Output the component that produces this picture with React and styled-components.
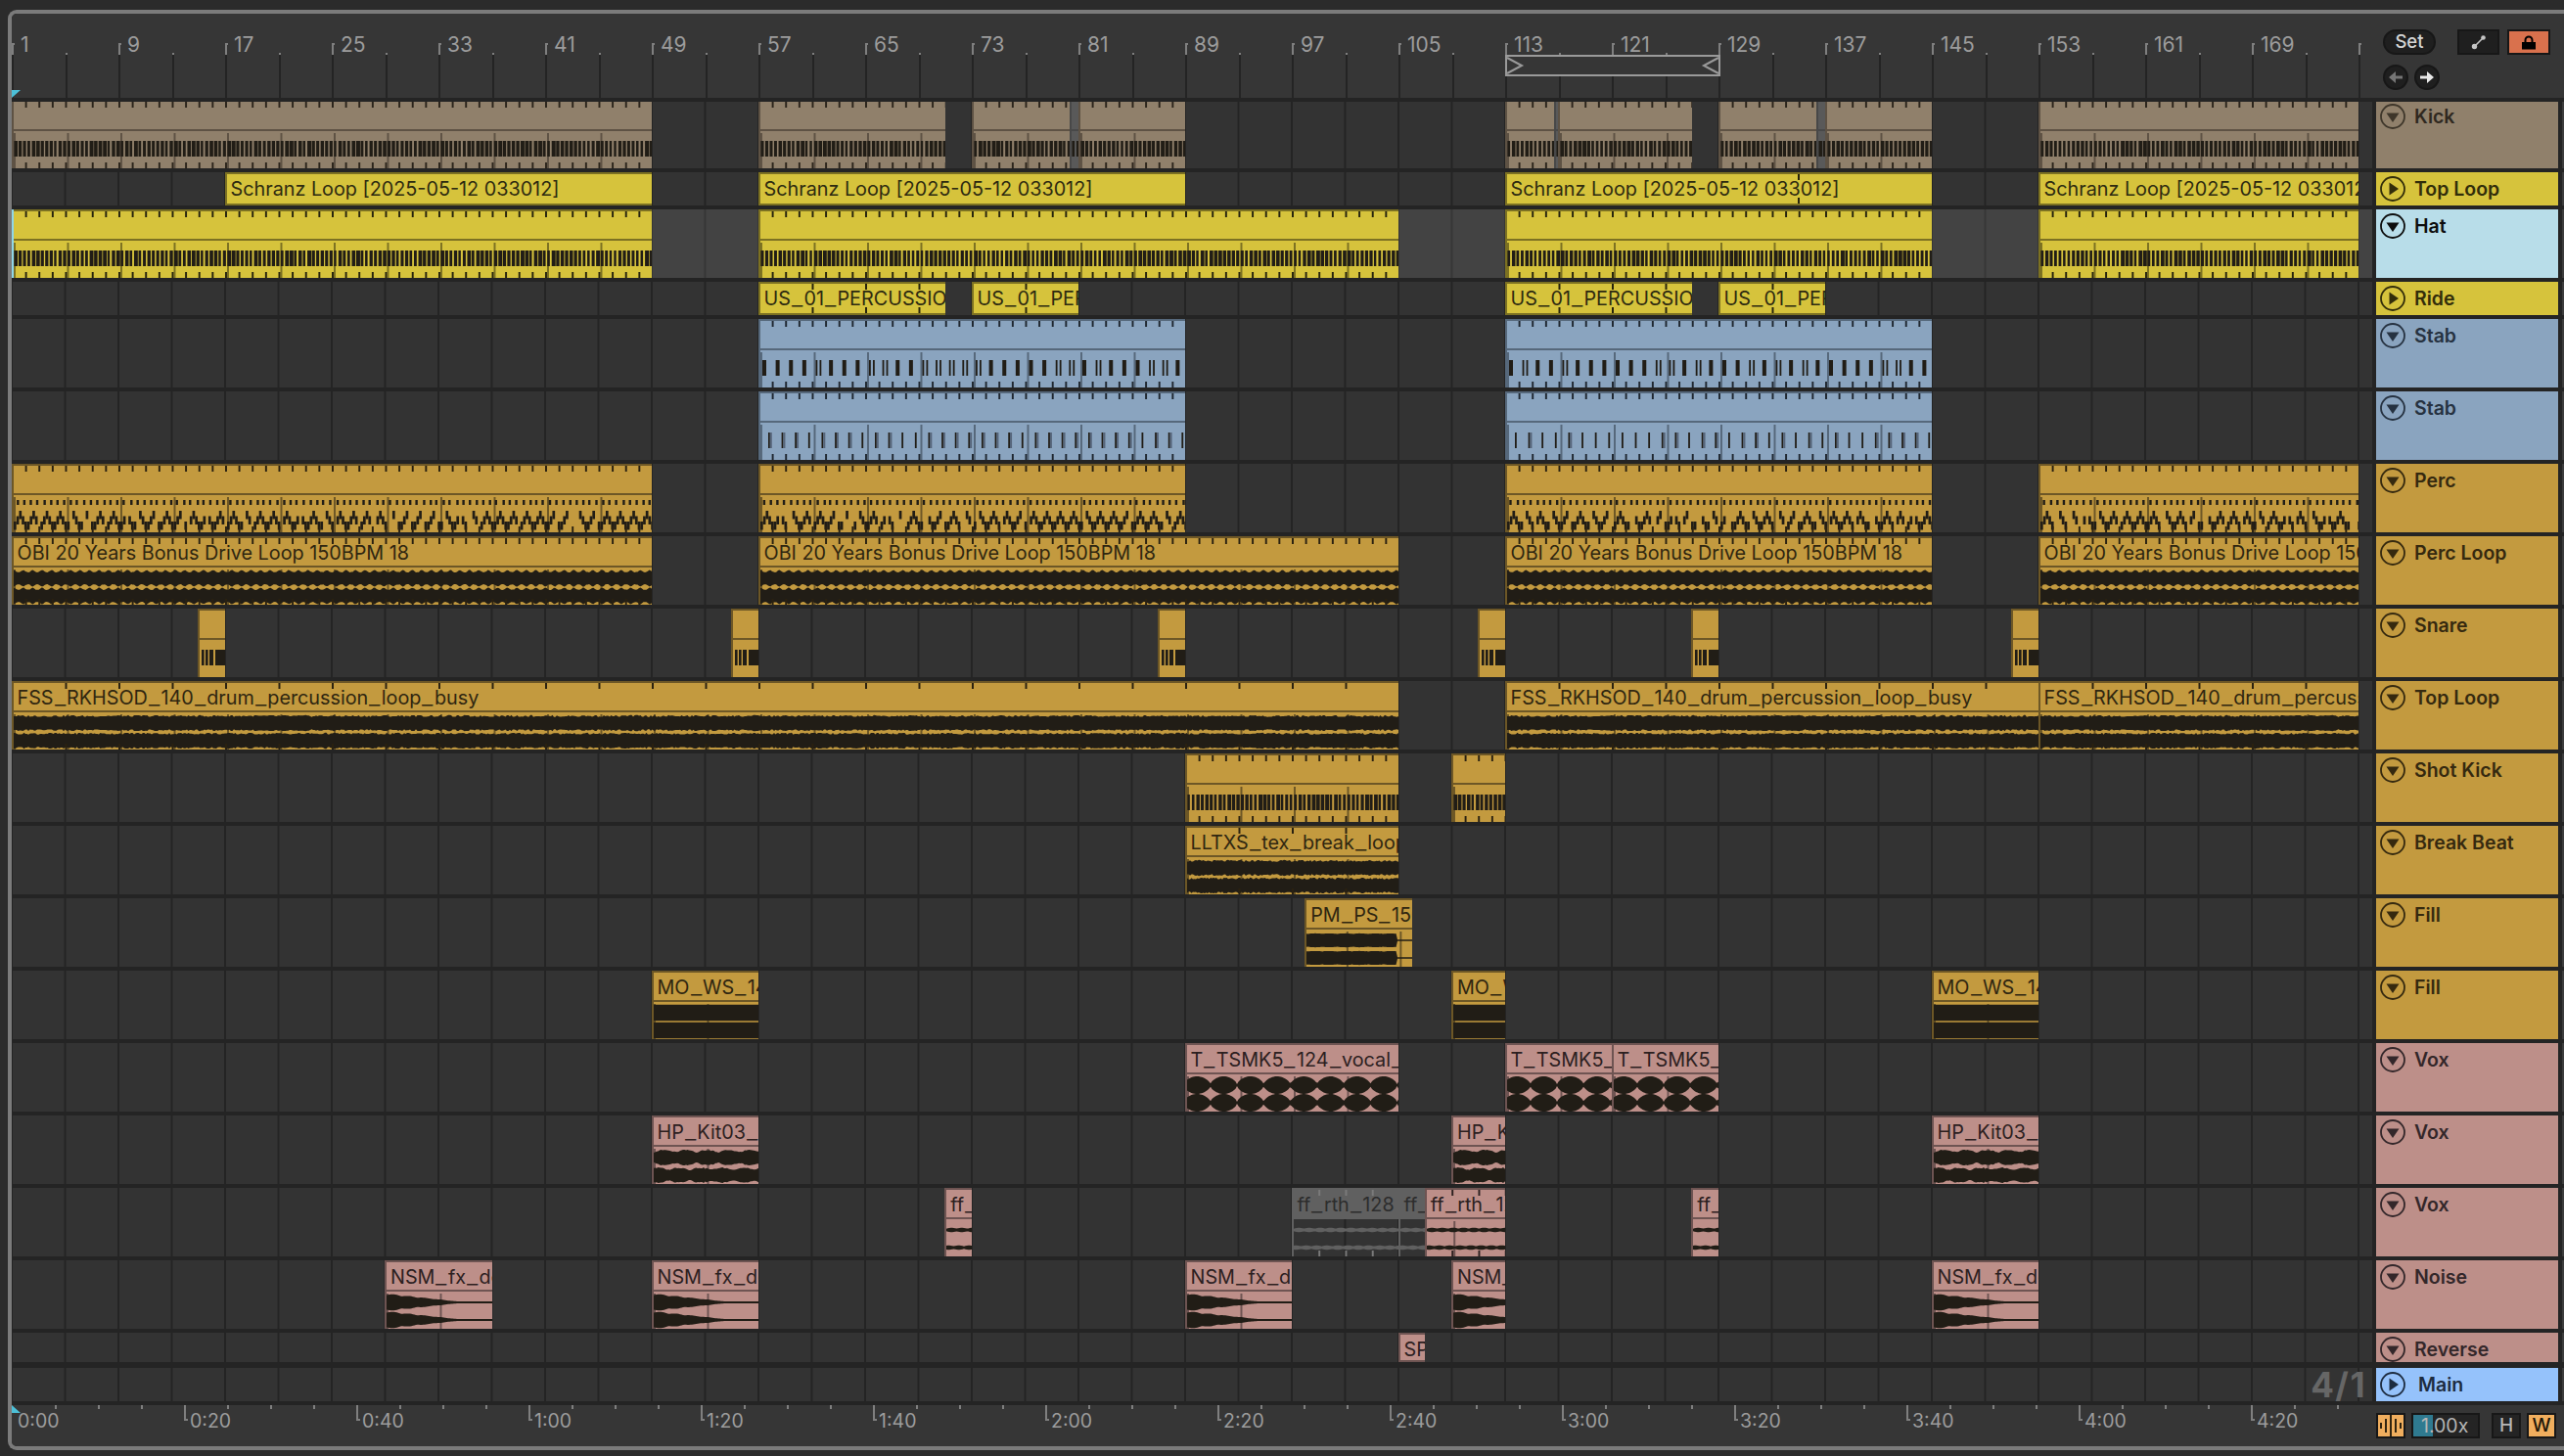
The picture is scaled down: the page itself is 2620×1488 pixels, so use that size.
import React from 'react'
import styled, { createGlobalStyle } from 'styled-components'

const BAR = 13.625
const INK = '#211d16'

const TONES = {
  tan: { bg: '#90806b', edge: '#5e5244', seam: '#5e5244', text: '#2b241b', tick: '#2b241b' },
  yellow: { bg: '#d6c33c', edge: '#7c7122', seam: '#7c7122', text: '#2d2a10', tick: '#26230d' },
  blue: { bg: '#8aa4bf', edge: '#56687b', seam: '#56687b', text: '#1e2833', tick: '#1f2730' },
  gold: { bg: '#c39a3f', edge: '#6d5726', seam: '#6d5726', text: '#2f2610', tick: '#2a2110' },
  pink: { bg: '#bd8f89', edge: '#6e5452', seam: '#6e5452', text: '#2c201f', tick: '#2c201f' },
  muted: { bg: '#595959', edge: '#484848', seam: '#484848', text: '#2a2a2a', tick: '#2a2a2a' },
  ghost: { bg: '#606060', edge: '#606060', seam: 'transparent', text: '#2d2d2d', tick: '#7a7a7a', clear: true },
}

const Global = createGlobalStyle`
  html, body { margin: 0; padding: 0; background: #2b2b2b; }
  body { font-family: Inter, "Noto Sans", "Liberation Sans", sans-serif; overflow: hidden; }
`

const Page = styled.div`
  width: 2620px;
  height: 1488px;
  padding: 10px 0 6px 8px;
  box-sizing: border-box;
`

const Frame = styled.div`
  height: 100%;
  box-sizing: border-box;
  border: 4px solid #7b7b7b;
  border-right: 0;
  border-radius: 9px 0 0 9px;
  background: #242424;
  display: flex;
  flex-direction: column;
  overflow: hidden;
`

const TopRow = styled.div`
  display: flex;
  height: 86px;
  flex: none;
  margin-bottom: 4px;
  background: #363636;
`

const RulerTop = styled.div`
  position: relative;
  width: 2412px;
  flex: none;
  display: flex;
  overflow: hidden;
`

const BarCell = styled.div`
  position: relative;
  flex: none;
  width: 109px;
  box-sizing: border-box;
  padding: 21px 0 0 9px;
  font-size: 21px;
  line-height: 22px;
  color: #9c9c9c;
  background:
    linear-gradient(#242424, #242424) 0 100% / 2px 44px no-repeat,
    linear-gradient(#242424, #242424) 54.5px 100% / 2px 44px no-repeat,
    linear-gradient(#7f7f7f, #7f7f7f) 54.5px 40px / 2px 2px no-repeat;
  &::before {
    content: '';
    position: absolute;
    left: 0;
    top: 30px;
    width: 3px;
    height: 12px;
    border-left: 2px solid #7f7f7f;
    border-top: 2px solid #7f7f7f;
    box-sizing: border-box;
  }
`

const Marker = styled.div`
  position: absolute;
  left: 0;
  width: 9px;
  height: 8px;
  background: #4cc0d8;
  z-index: 2;
  ${(p) => (p.$up
    ? 'top: 0; clip-path: polygon(0 0, 100% 100%, 0 100%);'
    : 'bottom: 0; clip-path: polygon(0 0, 100% 0, 0 100%);')}
`

const LoopBrace = styled.div`
  position: absolute;
  left: 1526px;
  top: 42px;
  width: 220px;
  height: 22px;
  box-sizing: border-box;
  border: 2px solid #9a9a9a;
  background: #363636;
  display: flex;
  justify-content: space-between;
  align-items: center;
  z-index: 1;
`

const ControlsTop = styled.div`
  width: 186px;
  margin-left: 4px;
  flex: none;
  box-sizing: border-box;
  padding: 16px 0 0 7px;
  display: flex;
  flex-direction: column;
  gap: 10px;
`

const ControlLine = styled.div`
  display: flex;
  align-items: center;
`

const SetPill = styled.div`
  width: 57px;
  height: 26px;
  box-sizing: border-box;
  border-radius: 13px;
  background: #1f1f1f;
  border: 2px solid #171717;
  color: #d4d4d4;
  font-size: 18.5px;
  font-weight: 500;
  line-height: 21px;
  text-align: center;
  margin-right: 22px;
`

const SquareBtn = styled.div`
  width: 46px;
  height: 26px;
  box-sizing: border-box;
  background: ${(p) => p.$bg || '#1f1f1f'};
  border: 2px solid #171717;
  margin-right: 8px;
  display: flex;
  align-items: center;
  justify-content: center;
`

const RoundBtn = styled.div`
  width: 26px;
  height: 26px;
  box-sizing: border-box;
  border-radius: 50%;
  background: #1f1f1f;
  border: 2px solid #171717;
  margin-right: 6px;
  display: flex;
  align-items: center;
  justify-content: center;
`

const Row = styled.div`
  display: flex;
  flex: none;
  height: ${(p) => p.$h}px;
  margin-bottom: ${(p) => p.$gap ?? 4}px;
`

const Lane = styled.div`
  position: relative;
  width: 2412px;
  flex: none;
  overflow: hidden;
  background-color: ${(p) => (p.$selected ? '#434343' : '#333333')};
  background-image: linear-gradient(to right, ${(p) => (p.$selected ? '#363636' : '#242424')} 2px, transparent 2px);
  background-size: 54.5px 100%;
  background-position: -1px 0;
  ${(p) => p.$selected && `
    &::after {
      content: '';
      position: absolute;
      left: 0;
      top: 0;
      bottom: 0;
      width: 2px;
      background: #8fd6e8;
      z-index: 3;
    }
  `}
`

const Edge = styled.div`
  width: 2px;
  margin-left: 4px;
  flex: none;
  background: #3c3c3c;
`

const Head = styled.div`
  width: 186px;
  margin-left: 4px;
  flex: none;
  box-sizing: border-box;
  padding: ${(p) => (p.$tight ? 2 : 4)}px 0 0 4px;
  background: ${(p) => p.$bg};
  color: ${(p) => p.$fg};
  display: flex;
  align-items: flex-start;
  gap: ${(p) => (p.$wide ? 13 : 9)}px;
  overflow: hidden;
`

const HeadName = styled.span`
  font-size: 19.5px;
  font-weight: 600;
  line-height: 26px;
`

const ClipBox = styled.div`
  position: absolute;
  top: 0;
  bottom: 0;
  box-sizing: border-box;
  display: flex;
  flex-direction: column;
  overflow: hidden;
  border-left: 2px solid ${(p) => p.$tone.edge};
  border-top: ${(p) => (p.$flat ? 0 : 2)}px solid ${(p) => p.$tone.edge};
  border-bottom: ${(p) => (p.$short ? 2 : 0)}px solid ${(p) => p.$tone.edge};
  background: ${(p) => (p.$tone.clear ? 'transparent' : p.$tone.bg)};
`

const ClipTitle = styled.div`
  flex: none;
  height: ${(p) => (p.$short ? '100%' : '30px')};
  box-sizing: border-box;
  padding-left: 4px;
  background: ${(p) => p.$tone.bg};
  border-bottom: ${(p) => (p.$short ? 0 : 2)}px solid ${(p) => (p.$tone.clear ? 'transparent' : p.$tone.edge)};
  color: ${(p) => p.$tone.text};
  font-size: 19.8px;
  line-height: 30px;
  white-space: nowrap;
  overflow: hidden;
`

// the clip font draws a long underscore
const Under = styled.span`
  display: inline-block;
  width: 13.5px;
  text-align: center;
  transform: scaleX(1.25);
`

const WaveBand = styled.div`
  flex: 1;
  position: relative;
  margin-top: 2px;
  background-image: linear-gradient(to right, ${(p) => p.$tone.seam} 2px, transparent 2px);
  background-size: 54.5px 100%;
  background-position: ${(p) => p.$shift}px 0;
  svg { position: absolute; left: 0; top: 0; display: block; }
`

const Ticks = styled.div`
  position: absolute;
  inset: 0;
  pointer-events: none;
  background-image:
    linear-gradient(to right, ${(p) => p.$color} 2px, transparent 2px),
    linear-gradient(to right, ${(p) => p.$color} 2px, transparent 2px);
  background-size: ${(p) => p.$step * BAR}px 6px;
  background-repeat: repeat-x;
  background-position: ${(p) => p.$shift}px 0, ${(p) => p.$shift}px 100%;
`

const SeamTick = styled.div`
  position: absolute;
  top: 0;
  bottom: 0;
  width: 2px;
  background: linear-gradient(${(p) => p.$color} 6px, transparent 6px, transparent calc(100% - 6px), ${(p) => p.$color} calc(100% - 6px));
`

const Meter = styled.div`
  position: absolute;
  right: 6px;
  top: 0;
  font-size: 35px;
  font-weight: 700;
  letter-spacing: 1.5px;
  line-height: 34px;
  color: #666666;
  z-index: 2;
`

const BottomRow = styled.div`
  flex: 1;
  display: flex;
  background: #363636;
`

const RulerBottom = styled.div`
  position: relative;
  width: 2412px;
  flex: none;
  display: flex;
  overflow: hidden;
`

const TimeCell = styled.div`
  position: relative;
  flex: none;
  width: 176px;
  box-sizing: border-box;
  padding: 5px 0 0 6px;
  font-size: 19.5px;
  line-height: 22px;
  color: #9c9c9c;
  background:
    linear-gradient(#7f7f7f, #7f7f7f) 44px 0 / 2px 4px no-repeat,
    linear-gradient(#7f7f7f, #7f7f7f) 88px 0 / 2px 4px no-repeat,
    linear-gradient(#7f7f7f, #7f7f7f) 132px 0 / 2px 4px no-repeat;
  &::before {
    content: '';
    position: absolute;
    left: 0;
    top: 0;
    width: 4px;
    height: 16px;
    box-sizing: border-box;
    border-left: 2px solid #7f7f7f;
    border-bottom: 2px solid #7f7f7f;
    opacity: ${(p) => (p.$first ? 0 : 1)};
  }
`

const ControlsBottom = styled.div`
  width: 186px;
  margin-left: 4px;
  flex: none;
  box-sizing: border-box;
  padding-top: 8px;
  display: flex;
  align-items: flex-start;
`

const SmallBtn = styled.div`
  width: 30px;
  height: 26px;
  box-sizing: border-box;
  border: 2px solid #171717;
  background: ${(p) => (p.$on ? '#f0ae5e' : '#242424')};
  color: ${(p) => (p.$on ? '#1c1608' : '#b6b6b6')};
  margin-left: ${(p) => p.$ml || 0}px;
  font-size: 19px;
  font-weight: 500;
  line-height: 22px;
  text-align: center;
  display: flex;
  align-items: center;
  justify-content: center;
`

const ZoomField = styled.div`
  position: relative;
  width: 70px;
  height: 26px;
  margin-left: 6px;
  box-sizing: border-box;
  border: 2px solid #171717;
  background: #242424;
  color: #b6b6b6;
  font-size: 19.5px;
  line-height: 22px;
  padding-left: 8px;
  overflow: hidden;
`

const ZoomFill = styled.div`
  position: absolute;
  left: 0;
  top: 0;
  bottom: 0;
  width: 20px;
  background: #2f7a90;
`

const ZoomText = styled.span`
  position: relative;
`

const rnd = (i, seed = 0) => {
  const v = Math.sin((i + 1) * 12.9898 + seed * 78.233) * 43758.5453
  return v - Math.floor(v)
}

// two stereo channels, mirrored round their own centre
const stereoPath = (w, amp, c1 = 9, c2 = 27) => {
  const step = 1.5
  const build = (c, salt) => {
    const top = []
    const bot = []
    for (let x = 0; x <= w + step; x += step) {
      const a = amp(x, salt)
      top.push(`${x.toFixed(1)} ${(c - a).toFixed(1)}`)
      bot.unshift(`${x.toFixed(1)} ${(c + a).toFixed(1)}`)
    }
    return `M${top.join('L')}L${bot.join('L')}Z`
  }
  return build(c1, 0) + build(c2, 1)
}

const AMPS = {
  obi: (x, s) => 5.9 + 2.3 * Math.pow(Math.abs(Math.cos((x * Math.PI) / 9.7)), 3) + 0.5 * rnd(Math.floor(x), s + 1),
  busy: (x, s) => 6.3 + 1.9 * rnd(Math.floor(x / 2), s + 3),
  brk: (x, s) => 6.2 + 2 * rnd(Math.floor(x / 1.5), s + 5),
  tail: (x, s) => (x > 92 ? 0.8 : 6.5 + 0.4 * Math.abs(Math.sin(x / 5)) + 0.3 * rnd(Math.floor(x), s)),
  flat: () => 8.2,
  vocal: (x) => 0.8 + 8.2 * Math.pow(Math.abs(Math.sin((x * Math.PI) / 27.25 + 0.4)), 0.6),
  kit: (x, s) => 4.8 + 2.2 * Math.abs(Math.sin(x / 7 + s)) + 1.2 * rnd(Math.floor(x / 2), s + 2),
  thin: (x, s) => 1.3 + 1 * Math.abs(Math.sin(x / 3.4 + s)),
  fade: (x) => {
    const t = Math.min(x / 72, 1)
    return (1 - t) * (6.5 + 1.6 * Math.abs(Math.sin(x / 5))) + 1
  },
}

const Wave = ({ kind, w, seed, fill }) => {
  const parts = []
  if (kind === 'pulse') {
    const n = Math.ceil(w / 4.54)
    for (let i = 0; i < n; i++) {
      parts.push(<rect key={i} x={i * 4.54 + 0.4} y={8} width={2.4 + rnd(i, seed) * 1.6} height={16} />)
    }
  } else if (kind === 'snare') {
    parts.push(<rect key="a" x={2} y={8} width={2.6} height={16} />)
    parts.push(<rect key="b" x={6} y={8} width={2.6} height={16} />)
    parts.push(<rect key="c" x={10} y={8} width={4} height={16} />)
    parts.push(<rect key="d" x={16} y={8} width={11} height={16} />)
  } else if (kind === 'stabA') {
    const n = Math.ceil(w / BAR)
    for (let i = 0; i < n; i++) {
      const x = i * BAR + 2
      if (rnd(i, seed) < 0.62) {
        parts.push(<rect key={i} x={x} y={8} width={4} height={16} />)
      } else {
        parts.push(<rect key={i} x={x} y={8} width={1.8} height={16} />)
        parts.push(<rect key={`${i}b`} x={x + 4} y={8} width={1.8} height={16} />)
      }
    }
  } else if (kind === 'stabB') {
    const n = Math.ceil(w / BAR)
    for (let i = 0; i < n; i++) {
      const x = i * BAR + 8
      parts.push(<rect key={i} x={x} y={8} width={1.8} height={16} />)
      if (rnd(i, seed) > 0.35) parts.push(<rect key={`${i}b`} x={x + 1.8} y={8} width={2} height={16} fill="#56657a" />)
    }
  } else if (kind === 'perc') {
    const n = Math.ceil(w / 6.8)
    for (let i = 0; i < n; i++) {
      parts.push(<rect key={`t${i}`} x={i * 6.8 + 2 + rnd(i, seed) * 1.5} y={3} width={2.4} height={5} />)
    }
    const m = Math.ceil(w / 2.725)
    for (let i = 0; i < m; i++) {
      const phase = Math.abs((i % 5) - 2) / 2
      if (rnd(i, seed) < 0.18) continue
      parts.push(<rect key={`z${i}`} x={i * 2.725} y={14 + phase * 11} width={2.7} height={8.5} />)
    }
  } else {
    parts.push(<path key="p" d={stereoPath(w, AMPS[kind])} />)
  }
  return (
    <svg width={w} height={36} fill={fill}>
      {parts}
    </svg>
  )
}

const ClipLabel = ({ text }) => {
  if (!text) return null
  const bits = text.split('_')
  return bits.map((b, i) => (
    <React.Fragment key={i}>
      {i > 0 && <Under>_</Under>}
      {b}
    </React.Fragment>
  ))
}

const Clip = ({ from, to, label, tone, wave, step, seams, flat, short }) => {
  const t = TONES[tone]
  const shift = -((from - 1) % 4) * BAR
  return (
    <ClipBox
      $tone={t}
      $flat={flat}
      $short={short}
      style={{ left: (from - 1) * BAR - 0.5, width: (to - from) * BAR + 0.5 }}
    >
      <ClipTitle $tone={t} $short={short}><ClipLabel text={label} /></ClipTitle>
      {!short && (
        <WaveBand $tone={t} $shift={shift}>
          {wave && <Wave kind={wave} w={Math.round((to - from) * BAR)} seed={from} fill={t.clear ? t.bg : INK} />}
        </WaveBand>
      )}
      {step > 0 && <Ticks $color={t.tick} $step={step} $shift={-((from - 1) % step) * BAR - 2} />}
      {seams && seams.map((s) => (
        <SeamTick key={s} $color={t.tick} style={{ left: (s - from) * BAR - 2 }} />
      ))}
    </ClipBox>
  )
}

const SCHRANZ = 'Schranz Loop [2025-05-12 033012]'
const OBI = 'OBI 20 Years Bonus Drive Loop 150BPM 18'
const FSS = 'FSS_RKHSOD_140_drum_percussion_loop_busy'

const TRACKS = [
  {
    name: 'Kick', h: 68, tone: 'tan', fg: '#2f281f', ring: '#3e362a', flat: true, tight: true, wave: 'pulse', step: 1,
    clips: [
      { from: 1, to: 49 }, { from: 57, to: 71 }, { from: 73, to: 80.4 }, { from: 80.4, to: 81, tone: 'muted', step: 0 },
      { from: 81, to: 89 }, { from: 113, to: 116.67 }, { from: 116.67, to: 117, tone: 'muted', step: 0 }, { from: 117, to: 127 },
      { from: 129, to: 136.4 }, { from: 136.4, to: 137, tone: 'muted', step: 0 }, { from: 137, to: 145 }, { from: 153, to: 177 },
    ],
  },
  {
    name: 'Top Loop', h: 34, tone: 'yellow', fg: '#322d0a', ring: '#322d0a', short: true, closed: true,
    clips: [
      { from: 17, to: 49, label: SCHRANZ }, { from: 57, to: 89, label: SCHRANZ },
      { from: 113, to: 145, label: SCHRANZ, seams: [135] }, { from: 153, to: 177, label: SCHRANZ },
    ],
  },
  {
    name: 'Hat', h: 70, tone: 'yellow', head: '#b8dde9', fg: '#0d0d0d', ring: '#0d0d0d', selected: true, wave: 'pulse', step: 1,
    clips: [{ from: 1, to: 49 }, { from: 57, to: 105 }, { from: 113, to: 145 }, { from: 153, to: 177 }],
  },
  {
    name: 'Ride', h: 34, tone: 'yellow', fg: '#322d0a', ring: '#322d0a', short: true, closed: true, step: 4,
    clips: [
      { from: 57, to: 71, label: 'US_01_PERCUSSION' }, { from: 73, to: 81, label: 'US_01_PERCUSSION' },
      { from: 113, to: 127, label: 'US_01_PERCUSSION' }, { from: 129, to: 137, label: 'US_01_PERCUSSION' },
    ],
  },
  {
    name: 'Stab', h: 70, tone: 'blue', fg: '#263241', ring: '#263241', wave: 'stabA', step: 1,
    clips: [{ from: 57, to: 89 }, { from: 113, to: 145 }],
  },
  {
    name: 'Stab', h: 70, tone: 'blue', fg: '#263241', ring: '#263241', wave: 'stabB', step: 1,
    clips: [{ from: 57, to: 89 }, { from: 113, to: 145 }],
  },
  {
    name: 'Perc', h: 70, tone: 'gold', fg: '#35290f', ring: '#35290f', wave: 'perc', step: 1,
    clips: [{ from: 1, to: 49 }, { from: 57, to: 89 }, { from: 113, to: 145 }, { from: 153, to: 177 }],
  },
  {
    name: 'Perc Loop', h: 70, tone: 'gold', fg: '#35290f', ring: '#35290f', wave: 'obi', step: 1,
    clips: [
      { from: 1, to: 49, label: OBI }, { from: 57, to: 105, label: OBI },
      { from: 113, to: 145, label: OBI }, { from: 153, to: 177, label: OBI },
    ],
  },
  {
    name: 'Snare', h: 70, tone: 'gold', fg: '#35290f', ring: '#35290f', wave: 'snare',
    clips: [
      { from: 15, to: 17 }, { from: 55, to: 57 }, { from: 87, to: 89 },
      { from: 111, to: 113 }, { from: 127, to: 129 }, { from: 151, to: 153 },
    ],
  },
  {
    name: 'Top Loop', h: 70, tone: 'gold', fg: '#35290f', ring: '#35290f', wave: 'busy', step: 4,
    clips: [{ from: 1, to: 105, label: FSS }, { from: 113, to: 153, label: FSS }, { from: 153, to: 177, label: FSS }],
  },
  {
    name: 'Shot Kick', h: 70, tone: 'gold', fg: '#35290f', ring: '#35290f', wave: 'pulse', step: 1,
    clips: [{ from: 89, to: 105 }, { from: 109, to: 113 }],
  },
  {
    name: 'Break Beat', h: 70, tone: 'gold', fg: '#35290f', ring: '#35290f', wave: 'brk', step: 4,
    clips: [{ from: 89, to: 105, label: 'LLTXS_tex_break_loop' }],
  },
  {
    name: 'Fill', h: 70, tone: 'gold', fg: '#35290f', ring: '#35290f', wave: 'tail',
    clips: [{ from: 98, to: 106, label: 'PM_PS_150_fill' }],
  },
  {
    name: 'Fill', h: 70, tone: 'gold', fg: '#35290f', ring: '#35290f', wave: 'flat',
    clips: [
      { from: 49, to: 57, label: 'MO_WS_140_fill' }, { from: 109, to: 113, label: 'MO_WS_140_fill' },
      { from: 145, to: 153, label: 'MO_WS_140_fill' },
    ],
  },
  {
    name: 'Vox', h: 70, tone: 'pink', fg: '#33272a', ring: '#33272a', wave: 'vocal',
    clips: [
      { from: 89, to: 105, label: 'T_TSMK5_124_vocal_loop' }, { from: 113, to: 121, label: 'T_TSMK5_124_vocal_loop' },
      { from: 121, to: 129, label: 'T_TSMK5_124_vocal_loop' },
    ],
  },
  {
    name: 'Vox', h: 70, tone: 'pink', fg: '#33272a', ring: '#33272a', wave: 'kit',
    clips: [
      { from: 49, to: 57, label: 'HP_Kit03_loop' }, { from: 109, to: 113, label: 'HP_Kit03_loop' },
      { from: 145, to: 153, label: 'HP_Kit03_loop' },
    ],
  },
  {
    name: 'Vox', h: 70, tone: 'pink', fg: '#33272a', ring: '#33272a', wave: 'thin',
    clips: [
      { from: 71, to: 73, label: 'ff_rth_128' },
      { from: 97, to: 105, label: 'ff_rth_128', tone: 'ghost', step: 2 },
      { from: 105, to: 107, label: 'ff_rth_128', tone: 'ghost' },
      { from: 107, to: 113, label: 'ff_rth_128', step: 2 },
      { from: 127, to: 129, label: 'ff_rth_128' },
    ],
  },
  {
    name: 'Noise', h: 70, tone: 'pink', fg: '#33272a', ring: '#33272a', wave: 'fade',
    clips: [
      { from: 29, to: 37, label: 'NSM_fx_down' }, { from: 49, to: 57, label: 'NSM_fx_down' },
      { from: 89, to: 97, label: 'NSM_fx_down' }, { from: 109, to: 113, label: 'NSM_fx_down' },
      { from: 145, to: 153, label: 'NSM_fx_down' },
    ],
  },
  {
    name: 'Reverse', h: 30, gap: 6, tone: 'pink', fg: '#33272a', ring: '#33272a', short: true,
    clips: [{ from: 105, to: 107, label: 'SP_reverse' }],
  },
  {
    name: 'Main', h: 34, head: '#95c2fb', fg: '#1d2c40', ring: '#1d2c40', closed: true, wide: true, master: true,
    clips: [],
  },
]

const BARS = Array.from({ length: 23 }, (_, i) => i * 8 + 1)
const TIMES = ['0:00', '0:20', '0:40', '1:00', '1:20', '1:40', '2:00', '2:20', '2:40', '3:00', '3:20', '3:40', '4:00', '4:20']

const FoldIcon = ({ color, closed }) => (
  <svg width="26" height="26" viewBox="0 0 26 26" style={{ flex: 'none' }}>
    <circle cx="13" cy="13" r="12" fill="none" stroke={color} strokeWidth="1.8" />
    {closed
      ? <path d="M9.5 6.5 L19 13 L9.5 19.5 Z" fill={color} />
      : <path d="M6.5 9.5 L19.5 9.5 L13 19 Z" fill={color} />}
  </svg>
)

const BraceArrow = ({ flip }) => (
  <svg width="18" height="18" viewBox="0 0 18 18" style={{ transform: flip ? 'scaleX(-1)' : 'none' }}>
    <path d="M0 1 L15 9 L0 17" fill="none" stroke="#9a9a9a" strokeWidth="2" />
  </svg>
)

const NavArrow = ({ flip, color }) => (
  <svg width="16" height="14" viewBox="0 0 16 14" style={{ transform: flip ? 'scaleX(-1)' : 'none' }}>
    <path d="M1 5.5 H8 V1 L15 7 L8 13 V8.5 H1 Z" fill={color} />
  </svg>
)

const ExpandIcon = () => (
  <svg width="18" height="18" viewBox="0 0 18 18">
    <path d="M5 13 L13 5" stroke="#c4c4c4" strokeWidth="1.6" />
    <circle cx="4.5" cy="13.5" r="2.7" fill="#c4c4c4" />
    <circle cx="13.5" cy="4.5" r="2.3" fill="#c4c4c4" />
  </svg>
)

const LockIcon = () => (
  <svg width="16" height="15" viewBox="0 0 16 15">
    <path d="M4.5 7 V5 a3.5 3.5 0 0 1 7 0 V7" fill="none" stroke="#000" strokeWidth="2" />
    <rect x="1" y="7" width="14" height="7.5" fill="#000" />
  </svg>
)

const SpectrumIcon = () => (
  <svg width="24" height="22" viewBox="0 0 24 22">
    <g stroke="#1c1608" strokeWidth="1.8">
      <path d="M2 8 V14" />
      <path d="M7 4 V18" />
      <path d="M12 0 V22" />
      <path d="M17 4 V18" />
      <path d="M22 8 V14" />
    </g>
  </svg>
)

export default function App() {
  return (
    <Page>
      <Global />
      <Frame>
        <TopRow>
          <RulerTop>
            {BARS.map((b) => (
              <BarCell key={b}>{b < 177 ? b : ''}</BarCell>
            ))}
            <Marker />
            <LoopBrace>
              <BraceArrow />
              <BraceArrow flip />
            </LoopBrace>
          </RulerTop>
          <ControlsTop>
            <ControlLine>
              <SetPill>Set</SetPill>
              <SquareBtn><ExpandIcon /></SquareBtn>
              <SquareBtn $bg="#d9714d"><LockIcon /></SquareBtn>
            </ControlLine>
            <ControlLine>
              <RoundBtn><NavArrow flip color="#757575" /></RoundBtn>
              <RoundBtn><NavArrow color="#e8e8e8" /></RoundBtn>
            </ControlLine>
          </ControlsTop>
        </TopRow>

        {TRACKS.map((t, i) => (
          <Row key={i} $h={t.h} $gap={t.gap}>
            <Lane $selected={t.selected}>
              {t.clips.map((c) => (
                <Clip
                  key={c.from}
                  {...c}
                  tone={c.tone || t.tone}
                  wave={t.wave}
                  step={c.step ?? t.step ?? 0}
                  flat={t.flat}
                  short={t.short}
                />
              ))}
              {t.master && <Meter>4/1</Meter>}
            </Lane>
            <Head
              $bg={t.head || TONES[t.tone].bg}
              $fg={t.fg}
              $tight={t.tight}
              $wide={t.wide}
            >
              <FoldIcon color={t.ring} closed={t.closed} />
              <HeadName>{t.name}</HeadName>
            </Head>
            <Edge />
          </Row>
        ))}

        <BottomRow>
          <RulerBottom>
            {TIMES.map((l, i) => (
              <TimeCell key={l} $first={i === 0}>{l}</TimeCell>
            ))}
            <Marker $up />
          </RulerBottom>
          <ControlsBottom>
            <SmallBtn $on><SpectrumIcon /></SmallBtn>
            <ZoomField>
              <ZoomFill />
              <ZoomText>1.00x</ZoomText>
            </ZoomField>
            <SmallBtn $ml={12}>H</SmallBtn>
            <SmallBtn $on $ml={6}>W</SmallBtn>
          </ControlsBottom>
        </BottomRow>
      </Frame>
    </Page>
  )
}
